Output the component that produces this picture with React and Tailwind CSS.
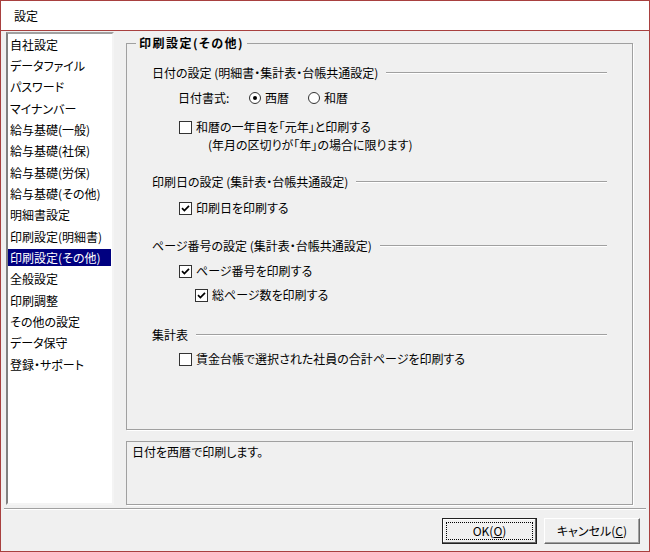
import React from 'react'

const menu = [
    '自社設定',
    'データファイル',
    'パスワード',
    'マイナンバー',
    '給与基礎(一般)',
    '給与基礎(社保)',
    '給与基礎(労保)',
    '給与基礎(その他)',
    '明細書設定',
    '印刷設定(明細書)',
    '印刷設定(その他)',
    '全般設定',
    '印刷調整',
    'その他の設定',
    'データ保守',
    '登録・サポート',
]

function Check({ checked }) {
    return (
        <span className="w-[13px] h-[13px] border border-[#333] bg-white flex items-center justify-center shrink-0">
            {checked && (
                <svg width="9" height="9" viewBox="0 0 9 9">
                    <path d="M1 4.2 L3.4 6.6 L8 1.8" stroke="#000" strokeWidth="1.7" fill="none" />
                </svg>
            )}
        </span>
    )
}

function Radio({ on }) {
    return (
        <span className="w-[12px] h-[12px] rounded-full border border-[#333] bg-white flex items-center justify-center shrink-0">
            {on && <span className="w-[4px] h-[4px] rounded-full bg-black" />}
        </span>
    )
}

function Section({ title, className }) {
    return (
        <div className={`flex items-center h-[16px] pl-[25px] pr-[25px] ${className}`}>
            <span className="whitespace-nowrap">{title}</span>
            <span className="flex-1 ml-[8px] border-t border-[#a0a0a0] border-b border-b-white" />
        </div>
    )
}

function CheckRow({ checked, label, className }) {
    return (
        <div className={`flex items-center h-[16px] gap-[4px] ${className}`}>
            <Check checked={checked} />
            <span className="whitespace-nowrap">{label}</span>
        </div>
    )
}

export default function App() {
    return (
        <div className="w-[650px] h-[552px] border border-[#a8403f] bg-[#f0f0f0] flex flex-col text-[12px] leading-[16px] text-black [font-feature-settings:'palt'] font-['Noto_Sans_CJK_JP','Noto_Sans',sans-serif]">
            {/* title */}
            <div className="h-[30px] shrink-0 bg-white border-b border-[#a8403f] flex items-center pl-[13px]">
                設定
            </div>

            <div className="h-[477px] shrink-0 flex">
                {/* menu list */}
                <div className="ml-[5px] mt-[1px] w-[108px] h-[473px] bg-white border-2 border-t-[#a0a0a0] border-l-[#808080] border-b-[#f4f4f4] border-r-[#f4f4f4]">
                    {menu.map((m, i) => (
                        <div key={m} className="h-[21.33px] flex items-center pr-[1px]">
                            <span className={`h-[17px] w-full flex items-center pl-[2px] whitespace-nowrap ${i === 10 ? 'bg-[#000080] text-white' : ''}`}>
                                {m}
                            </span>
                        </div>
                    ))}
                </div>

                <div className="ml-[12px] flex flex-col">
                    {/* group box */}
                    <div className="relative mt-[12px] w-[507px] h-[387px] border border-[#a0a0a0] shadow-[1px_1px_0_#fff] flex flex-col">
                        <span className="absolute -top-[9px] left-[9px] px-[3px] bg-[#f0f0f0] font-bold tracking-[1.5px] leading-[16px]">
                            印刷設定(その他)
                        </span>

                        <Section title="日付の設定 (明細書・集計表・台帳共通設定)" className="mt-[21px]" />
                        <div className="mt-[9px] pl-[51px] flex items-center h-[16px]">
                            <span className="w-[71px]">日付書式:</span>
                            <Radio on />
                            <span className="ml-[4px]">西暦</span>
                            <span className="ml-[19px]"><Radio /></span>
                            <span className="ml-[4px]">和暦</span>
                        </div>
                        <CheckRow label="和暦の一年目を「元年」と印刷する" className="mt-[13px] pl-[52px]" />
                        <div className="mt-[2px] pl-[81px] h-[16px] whitespace-nowrap">
                            (年月の区切りが「年」の場合に限ります)
                        </div>

                        <Section title="印刷日の設定 (集計表・台帳共通設定)" className="mt-[21px]" />
                        <CheckRow checked label="印刷日を印刷する" className="mt-[10px] pl-[52px]" />

                        <Section title="ページ番号の設定 (集計表・台帳共通設定)" className="mt-[22px]" />
                        <CheckRow checked label="ページ番号を印刷する" className="mt-[9px] pl-[52px]" />
                        <CheckRow checked label="総ページ数を印刷する" className="mt-[8px] pl-[68px]" />

                        <Section title="集計表" className="mt-[24px]" />
                        <CheckRow label="賃金台帳で選択された社員の合計ページを印刷する" className="mt-[8px] pl-[52px]" />
                    </div>

                    {/* description */}
                    <div className="mt-[11px] w-[507px] h-[64px] border border-[#a0a0a0] shadow-[1px_1px_0_#fff] pl-[5px] pt-[2px]">
                        日付を西暦で印刷します。
                    </div>
                </div>
            </div>

            <div className="mx-[3px] border-t border-[#a0a0a0] border-b border-b-white" />

            <div className="mt-[8px] flex justify-end gap-[7px] pr-[9px]">
                <button className="w-[95px] h-[26px] border border-[#222] bg-[#f0f0f0] p-[3px] shadow-[inset_-1px_-1px_0_#696969,inset_1px_1px_0_#fff]">
                    <span className="w-full h-full flex items-center justify-center border border-dotted border-black">
                        OK(<span className="underline">O</span>)
                    </span>
                </button>
                <button className="w-[96px] h-[26px] bg-[#f0f0f0] border border-t-white border-l-white border-b-[#696969] border-r-[#696969] shadow-[inset_-1px_-1px_0_#a0a0a0] flex items-center justify-center">
                    キャンセル(<span className="underline">C</span>)
                </button>
            </div>
        </div>
    )
}
